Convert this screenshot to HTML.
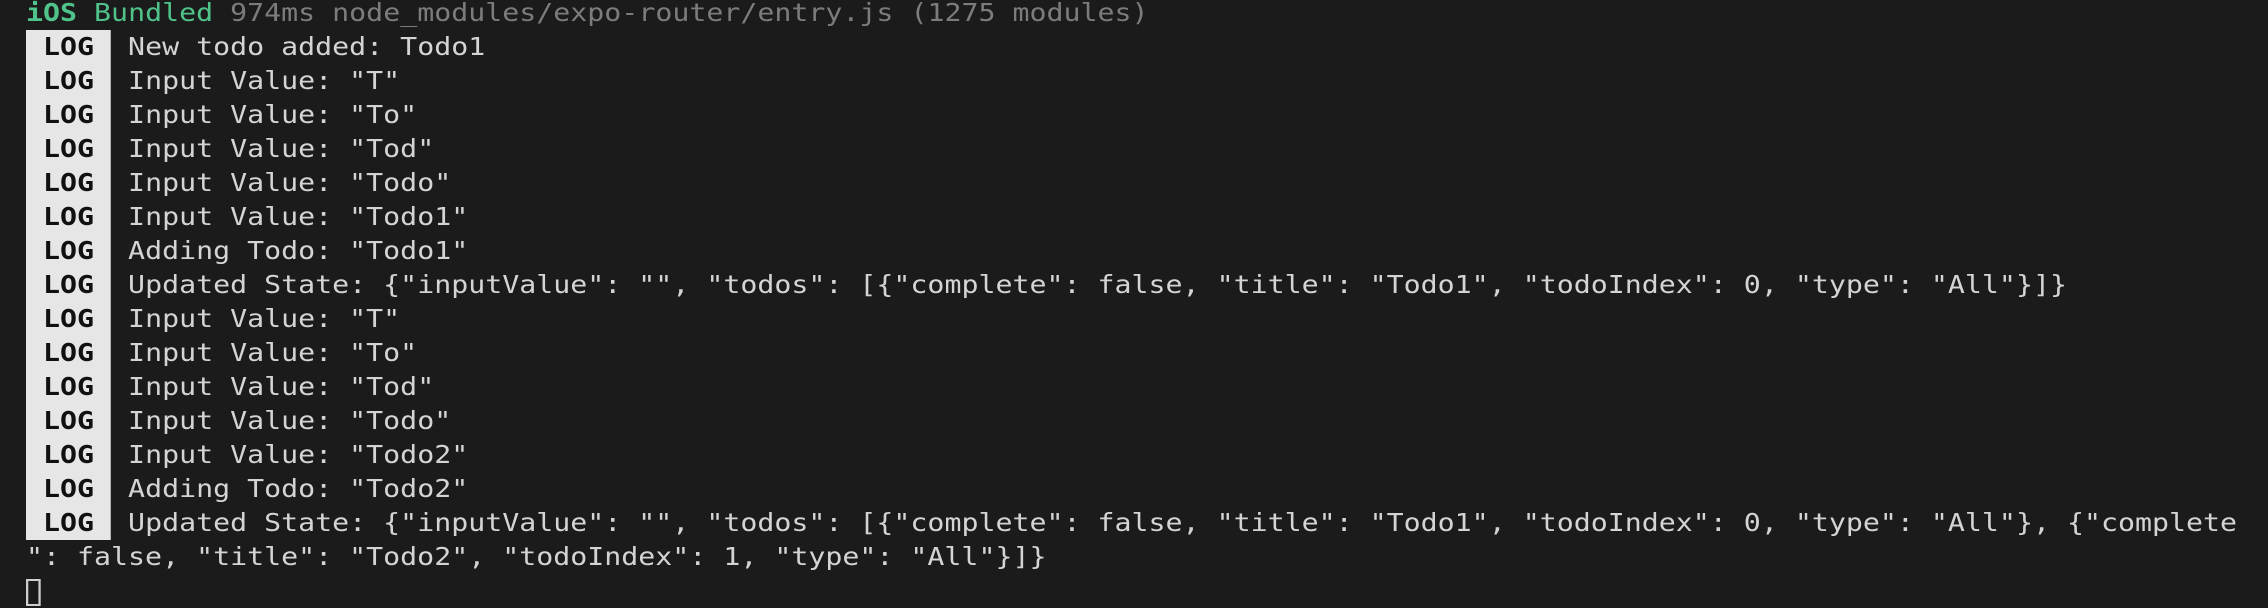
<!DOCTYPE html>
<html><head><meta charset="utf-8"><style>
html,body{margin:0;padding:0;background:#1b1b1b;width:2268px;height:602px;overflow:hidden}
pre{margin:0;position:absolute;left:26px;top:-4px;font-family:"DejaVu Sans Mono","Liberation Mono",monospace;font-size:25px;line-height:34px;color:#d4d4d4;transform:scaleX(1.13);transform-origin:0 0;white-space:pre}
.b{background:#e6e6e6;color:#111;font-weight:bold;display:inline-block;height:34px;vertical-align:top}
.g{color:#4fc38a}
.gb{color:#4fc38a;font-weight:bold}
.d{color:#7c7c7c}
.c{display:inline-block;width:13px;height:27px;border:2px solid #cfcfcf;box-sizing:border-box;vertical-align:-7px}
</style></head><body><pre><span class="gb">iOS</span> <span class="g">Bundled</span> <span class="d">974ms node_modules/expo-router/entry.js (1275 modules)</span>
<span class="b"> LOG </span> New todo added: Todo1
<span class="b"> LOG </span> Input Value: "T"
<span class="b"> LOG </span> Input Value: "To"
<span class="b"> LOG </span> Input Value: "Tod"
<span class="b"> LOG </span> Input Value: "Todo"
<span class="b"> LOG </span> Input Value: "Todo1"
<span class="b"> LOG </span> Adding Todo: "Todo1"
<span class="b"> LOG </span> Updated State: {"inputValue": "", "todos": [{"complete": false, "title": "Todo1", "todoIndex": 0, "type": "All"}]}
<span class="b"> LOG </span> Input Value: "T"
<span class="b"> LOG </span> Input Value: "To"
<span class="b"> LOG </span> Input Value: "Tod"
<span class="b"> LOG </span> Input Value: "Todo"
<span class="b"> LOG </span> Input Value: "Todo2"
<span class="b"> LOG </span> Adding Todo: "Todo2"
<span class="b"> LOG </span> Updated State: {"inputValue": "", "todos": [{"complete": false, "title": "Todo1", "todoIndex": 0, "type": "All"}, {"complete
": false, "title": "Todo2", "todoIndex": 1, "type": "All"}]}
<span class="c"></span></pre></body></html>
